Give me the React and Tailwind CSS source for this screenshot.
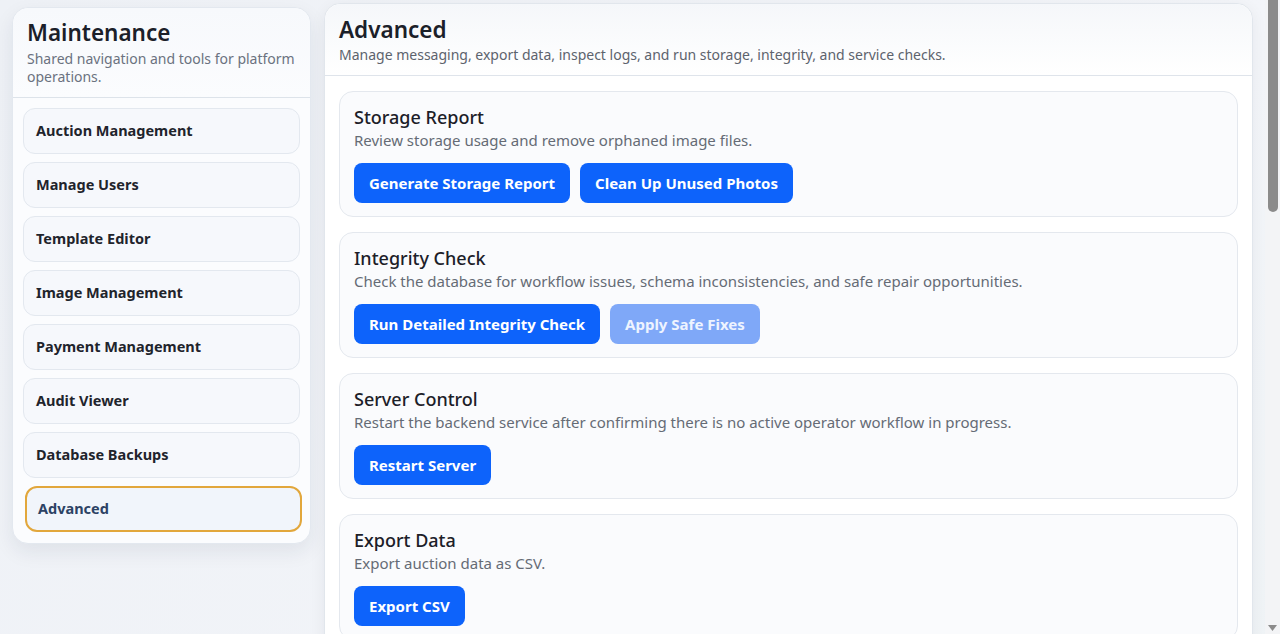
import React, { useState } from "react";

const NAV = [
  "Auction Management",
  "Manage Users",
  "Template Editor",
  "Image Management",
  "Payment Management",
  "Audit Viewer",
  "Database Backups",
  "Advanced",
];

const SECTIONS = [
  {
    title: "Storage Report",
    text: "Review storage usage and remove orphaned image files.",
    actions: [{ label: "Generate Storage Report" }, { label: "Clean Up Unused Photos" }],
  },
  {
    title: "Integrity Check",
    text: "Check the database for workflow issues, schema inconsistencies, and safe repair opportunities.",
    actions: [{ label: "Run Detailed Integrity Check" }, { label: "Apply Safe Fixes", disabled: true }],
  },
  {
    title: "Server Control",
    text: "Restart the backend service after confirming there is no active operator workflow in progress.",
    actions: [{ label: "Restart Server" }],
  },
  {
    title: "Export Data",
    text: "Export auction data as CSV.",
    actions: [{ label: "Export CSV" }],
  },
  {
    title: "Messaging",
    text: "Send a broadcast message to bidders and sellers.",
    actions: [{ label: "Compose Message" }],
  },
  {
    title: "Server Logs",
    text: "Inspect recent backend log output.",
    actions: [{ label: "View Logs" }, { label: "Download Logs" }],
  },
];

function Sidebar({ active, onSelect }) {
  return (
    <aside className="w-[299px] shrink-0 mt-1 self-start rounded-2xl border border-[#e3e8ef] bg-[#fbfcfe] shadow-[0_8px_20px_rgba(30,41,59,0.08)]">
      <div className="px-[14px] pt-[11px] pb-[11px] border-b border-[#dde3ea] bg-gradient-to-b from-[#f7f9fc] to-[#fbfcfe] rounded-t-2xl">
        <h2 className="text-[22.5px] leading-[28px] font-semibold text-[#1b2029]">Maintenance</h2>
        <p className="mt-[3px] text-[14px] leading-[18px] text-[#6b7280]">
          Shared navigation and tools for platform operations.
        </p>
      </div>
      <nav className="flex flex-col gap-2 px-[10px] pt-[10px] pb-[11px]">
        {NAV.map((item) => {
          const on = item === active;
          return (
            <button
              key={item}
              onClick={() => onSelect(item)}
              className={
                on
                  ? "h-[46px] translate-x-[2px] rounded-xl border-2 border-[#e2a73c] bg-[#f1f5fb] px-[11px] text-left text-[14.5px] font-bold text-[#2c4264]"
                  : "h-[46px] rounded-xl border border-[#e3e8ef] bg-[#f6f8fc] px-3 text-left text-[14.5px] font-bold text-[#1f242c]"
              }
            >
              {item}
            </button>
          );
        })}
      </nav>
    </aside>
  );
}

function Section({ title, text, actions }) {
  return (
    <section className="rounded-[14px] border border-[#e4e8ee] bg-[#fafbfd] px-[14px] pt-[13px] pb-[13px]">
      <h3 className="text-[18px] leading-[24px] font-medium text-[#1c2028]">{title}</h3>
      <p className="text-[15px] leading-[23px] text-[#656b75]">{text}</p>
      <div className="mt-[11px] flex gap-[10px]">
        {actions.map((a) => (
          <button
            key={a.label}
            disabled={a.disabled}
            className={
              a.disabled
                ? "h-10 rounded-lg bg-[#7fa8f8] px-[15px] text-[15px] font-bold text-[#eef4ff]"
                : "h-10 rounded-lg bg-[#0d63fb] px-[15px] text-[15px] font-bold text-white"
            }
          >
            {a.label}
          </button>
        ))}
      </div>
    </section>
  );
}

// classic page scrollbar, pinned to the right edge
function ScrollRail() {
  return (
    <div className="fixed right-0 top-0 flex h-screen w-[15px] flex-col items-center bg-[#f3f4f6]">
      <div className="mt-0 h-[212px] w-[10px] rounded-b-full bg-[#8b8b8b]" />
      <div className="flex-1" />
      <svg width="9" height="6" viewBox="0 0 9 6" className="mb-[3px]">
        <path d="M0 0h9L4.5 6z" fill="#8b8b8b" />
      </svg>
    </div>
  );
}

export default function App() {
  const [active, setActive] = useState("Advanced");

  return (
    <div
      className="min-h-screen w-full bg-gradient-to-br from-[#eef1f6] via-[#f3f5f9] to-[#e9f1f1] text-[#1c2028]"
      style={{ fontFamily: '"Noto Sans", "Open Sans", sans-serif' }}
    >
      <div className="flex gap-[13px] pl-3 pr-[27px] pt-[3px]">
        <Sidebar active={active} onSelect={setActive} />

        <main className="flex-1 rounded-t-2xl border border-[#e1e6ec] bg-white shadow-[0_4px_16px_rgba(30,41,59,0.06)]">
          <header className="px-[14px] pt-[12px] pb-[9px] border-b border-[#dfe4eb] bg-gradient-to-b from-[#f5f7fa] to-white rounded-t-2xl">
            <h1 className="text-[22.5px] leading-[28px] font-semibold text-[#1b2029]">Advanced</h1>
            <p className="text-[14px] leading-[22px] text-[#5d636d]">
              Manage messaging, export data, inspect logs, and run storage, integrity, and service checks.
            </p>
          </header>

          <div className="flex flex-col gap-[15px] px-[14px] pt-[15px] pb-6">
            {SECTIONS.map((s) => (
              <Section key={s.title} {...s} />
            ))}
            <div className="h-[940px]" />
          </div>
        </main>
      </div>
      <ScrollRail />
    </div>
  );
}
